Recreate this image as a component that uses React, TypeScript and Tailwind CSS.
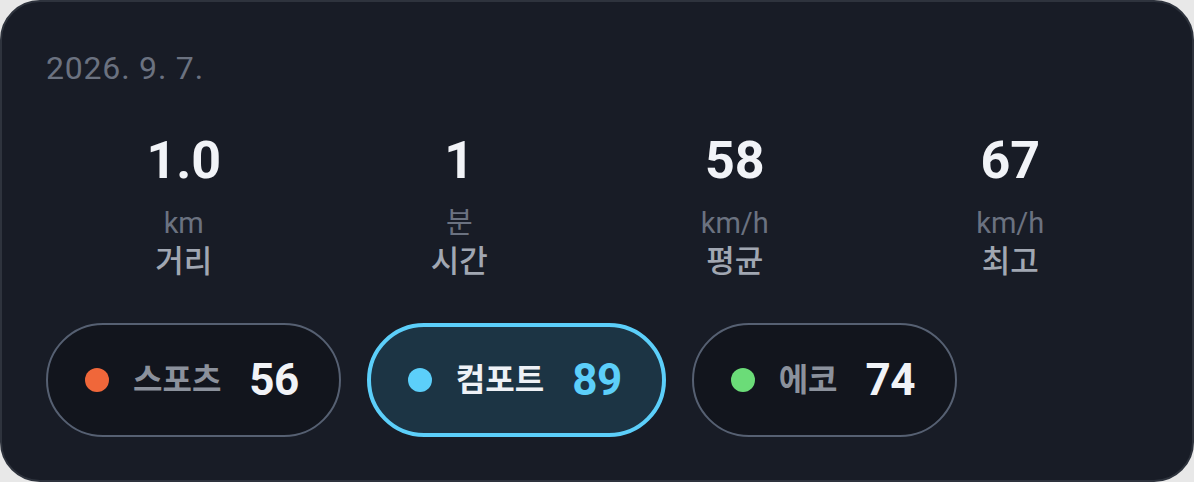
import React from 'react';

interface Stat {
  value: string;
  unit: string;
  label: string;
}

interface Mode {
  name: string;
  score: number;
  dot: string;
  active?: boolean;
}

const stats: Stat[] = [
  { value: '1.0', unit: 'km', label: '거리' },
  { value: '1', unit: '분', label: '시간' },
  { value: '58', unit: 'km/h', label: '평균' },
  { value: '67', unit: 'km/h', label: '최고' },
];

const modes: Mode[] = [
  { name: '스포츠', score: 56, dot: 'bg-[#f0673a]' },
  { name: '컴포트', score: 89, dot: 'bg-[#5ccffa]', active: true },
  { name: '에코', score: 74, dot: 'bg-[#6bdc78]' },
];

const font = { fontFamily: '"Roboto", "Noto Sans CJK KR", sans-serif' };

const ModePill: React.FC<{ mode: Mode }> = ({ mode }) => {
  const { name, score, dot, active } = mode;
  return (
    <div
      className={`flex h-[114px] items-center rounded-full pl-[37px] pr-[40px] ${
        active
          ? 'border-[4px] border-[#5ccffa] bg-[#1c3444]'
          : 'border-2 border-[#566072] bg-[#12151d]'
      }`}
    >
      <span className={`h-[24px] w-[24px] rounded-full ${dot}`} />
      <span
        className={`ml-[24px] text-[32px] font-bold leading-none ${
          active ? 'text-[#eef1f6]' : 'text-[#8b919c]'
        }`}
      >
        {name}
      </span>
      <span
        className={`ml-[28px] text-[44px] font-bold leading-none tracking-[-0.5px] ${
          active ? 'text-[#5ccffa]' : 'text-[#f1f3f7]'
        }`}
      >
        {score}
      </span>
    </div>
  );
};

export default function App() {
  return (
    <div className="min-h-screen bg-[#e8e8e8]" style={font}>
      <div className="flex h-[482px] w-[1194px] flex-col rounded-[40px] border-2 border-[#2e333d] bg-[#181c26] px-[44px] pt-[47px]">
        {/* Date */}
        <div className="text-[32px] leading-[38px] tracking-[0.8px] text-[#6b7280]">2026. 9. 7.</div>

        {/* Trip stats */}
        <div className="mt-[48px] grid grid-cols-4">
          {stats.map((s) => (
            <div key={s.label} className="flex flex-col items-center">
              <div className="text-[52px] font-bold leading-none text-[#f1f3f7]">{s.value}</div>
              <div className="mt-[19px] text-[29px] leading-[34px] text-[#6b7280]">{s.unit}</div>
              <div className="mt-[4px] text-[31px] font-medium leading-[36px] text-[#a1a7b2]">{s.label}</div>
            </div>
          ))}
        </div>

        {/* Drive modes */}
        <div className="mt-[43px] flex gap-[26px]">
          {modes.map((m) => (
            <ModePill key={m.name} mode={m} />
          ))}
        </div>
      </div>
    </div>
  );
}
